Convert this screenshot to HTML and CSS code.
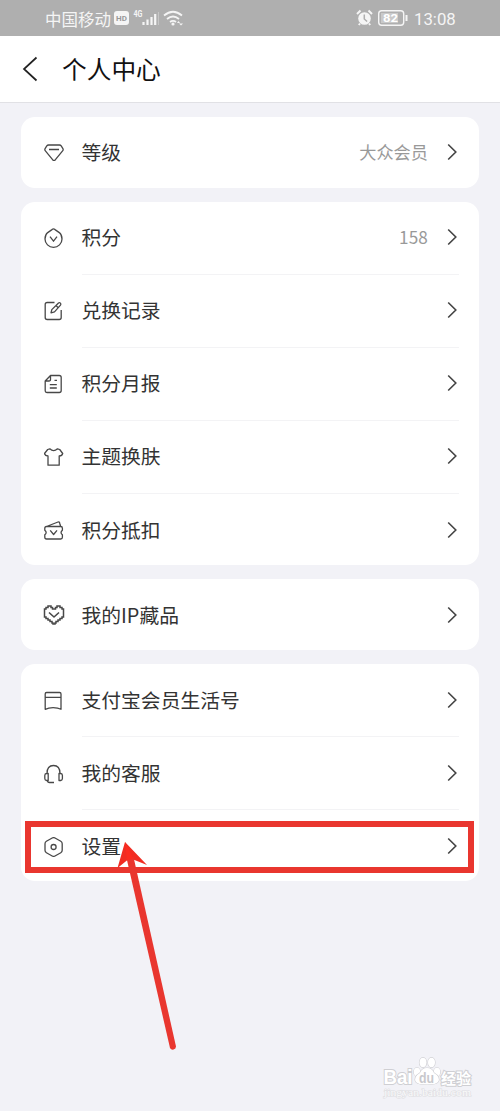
FILE: index.html
```html
<!DOCTYPE html>
<html lang="zh-CN">
<head>
<meta charset="utf-8">
<title>个人中心</title>
<link rel="stylesheet" href="styles.css">
</head>
<body>
<div class="screen">
  <header class="status">
    <span class="carrier">中国移动</span>
    <svg class="status-left" width="72" height="20" viewBox="0 0 72 20">
      <rect x="1" y="2" width="15" height="14" rx="3" fill="#f5f5f5"/>
      <text x="8.5" y="12.2" class="hd">HD</text>
      <text x="20.500" y="8" class="gen" textLength="9" lengthAdjust="spacingAndGlyphs">4G</text>
      <path d="M30.500 16v-3M34.500 16v-5.500M38.500 16V8M42.200 16V5" stroke="#f5f5f5" stroke-width="2.200"/>
      <path d="M45.500 3v13" stroke="#c6c6c6"/>
      <path d="M51 6.500q9-7.500 18 0M54 10q6-5 12 0M57 13q3-2.200 6 0" fill="none" stroke="#f5f5f5" stroke-width="1.800"/>
      <circle cx="60" cy="15" r="1.600" fill="#f5f5f5"/>
      <path d="M64 14l1.500-2 1.500 2zM66 14.500h4l-2 2z" fill="#f5f5f5"/>
    </svg>
    <svg class="status-right" width="52" height="20" viewBox="0 0 52 20">
      <circle cx="8.500" cy="9.500" r="6.300" fill="#f5f5f5"/>
      <path d="M1 5l3.500-3.500M16 5l-3.500-3.500M4 14.500L2.800 16M13 14.500l1.200 1.500" stroke="#f5f5f5" stroke-width="2"/>
      <path d="M8.300 5.500V10l2.800 2.500" fill="none" stroke="#afafaf" stroke-width="1.500"/>
      <rect x="22.700" y="1.700" width="25" height="14.600" rx="3" fill="none" stroke="#f5f5f5" stroke-width="1.400"/>
      <rect x="25" y="4" width="17" height="10" fill="#c9c9c9"/>
      <path d="M50.500 6v6" stroke="#f5f5f5" stroke-width="2"/>
      <text x="34.500" y="13" class="charge" textLength="15" lengthAdjust="spacingAndGlyphs">82</text>
    </svg>
    <span class="clock">13:08</span>
  </header>
  <nav class="titlebar">
    <svg width="18" height="26" viewBox="0 0 18 26"><path d="M14.500 1.500L2 13l12.500 11.500" class="back"/></svg>
    <h1>个人中心</h1>
  </nav>
  <main class="cards">
    <section class="card level">
      <div class="row"><svg class="icon" viewBox="0 0 20 20"><path d="M4.500 2h11q1 0 1.700.9l1.700 2.700q.7 1.200-.3 2.300l-7.200 8.800q-1.400 1.500-2.800 0L1.400 7.900q-1-1.100-.3-2.300l1.700-2.700Q3.500 2 4.500 2zM5 6.500h10"/></svg><span>等级</span><em>大众会员</em><svg class="go" viewBox="0 0 10 18"><path d="M1.200 1.500L8.800 9l-7.600 7.500"/></svg></div>
    </section>
    <section class="card">
      <div class="row"><svg class="icon" viewBox="0 0 20 20"><path d="M8 1.600Q9.500.2 11 1.600l4.300 3C17.500 6.400 18 8.500 18 11a8.500 8.300 0 0 1-17 0c0-2.500.5-4.600 2.700-6.400zM6 8.700l3.500 4.500 3.500-4.500"/></svg><span>积分</span><em class="points">158</em><svg class="go" viewBox="0 0 10 18"><path d="M1.200 1.500L8.800 9l-7.600 7.500"/></svg></div>
      <div class="row"><svg class="icon" viewBox="0 0 20 20"><path d="M10.500 1.500H3.200Q1.200 1.500 1.200 3.500v13q0 2 2 2h12q2 0 2-2V9M12 4.500l2.500-2.500q1-.8 1.900.1t.1 2L10.500 10.900l-3.500 1 .8-3.300 4.200-4.100 2.200 2.200"/></svg><span>兑换记录</span><svg class="go" viewBox="0 0 10 18"><path d="M1.200 1.500L8.800 9l-7.600 7.500"/></svg></div>
      <div class="row"><svg class="icon" viewBox="0 0 20 20"><path d="M6.500 1.500h8.700q2 0 2 2v13q0 2-2 2h-12q-2 0-2-2V7zM6.500 1.500v4Q6.500 7 5 7H1.200M5.800 10.700h7M5.800 14h7M10.500 6.300H13"/></svg><span>积分月报</span><svg class="go" viewBox="0 0 10 18"><path d="M1.200 1.500L8.800 9l-7.600 7.500"/></svg></div>
      <div class="row"><svg class="icon" viewBox="0 0 20 20"><path d="M5.800 1.800Q9.600 5.500 13.500 1.800l2.200.7 3 4q-.6 2.400-3.500 2.500v9.200H4V9Q1 8.900.5 6.500L3.700 2.500z"/></svg><span>主题换肤</span><svg class="go" viewBox="0 0 10 18"><path d="M1.200 1.500L8.800 9l-7.600 7.500"/></svg></div>
      <div class="row"><svg class="icon" viewBox="0 0 20 20"><path d="M2.500 5.500h14.200q1.700 0 1.700 1.700v2q-2.700 2.300 0 4.600v2.500q0 1.700-1.700 1.700H2.500Q.8 18 .8 16.300v-2.500q2.700-2.300 0-4.600v-2q0-1.700 1.700-1.700zM2.500 5.500L14 1q1.400-.4 1.700 1.200l1 3.300M6.200 9.300l3.400 4.200L13 9.300"/></svg><span>积分抵扣</span><svg class="go" viewBox="0 0 10 18"><path d="M1.200 1.500L8.800 9l-7.600 7.500"/></svg></div>
    </section>
    <section class="card collection">
      <div class="row"><svg class="icon heart" viewBox="0 0 22 22"><path class="pixels" d="M5 2h3v1.500h1.500V5h3V3.500H14V2h3v1.500h2V5h1.500v8H19v1.500h-2V16h-2v1.500h-2V19h-1v1h-2v-1H9v-1.500H7V16H5v-1.500H3V13H1.500V5H3V3.500h2z"/><path d="M6 8.500l5 4.500 5-4.500"/></svg><span>我的IP藏品</span><svg class="go" viewBox="0 0 10 18"><path d="M1.200 1.500L8.800 9l-7.600 7.500"/></svg></div>
    </section>
    <section class="card service">
      <div class="row"><svg class="icon" viewBox="0 0 20 20"><path d="M2.600 1.500h13q1.400 0 1.400 1.400v15.400q-3-1.600-7.900-1.600Q4.500 16.700 1.200 18.300V2.900q0-1.400 1.400-1.400zM1.200 6.300H17"/></svg><span>支付宝会员生活号</span><svg class="go" viewBox="0 0 10 18"><path d="M1.200 1.500L8.800 9l-7.600 7.500"/></svg></div>
      <div class="row"><svg class="icon" viewBox="0 0 20 20"><path d="M3 9.500Q3 1.500 9.500 1.500t6.500 8M2.500 9.500h1.700v7H2.500Q.8 16.300.8 14.500v-3q0-1.900 1.700-2zM15 9.500h1.700q1.700.1 1.700 2v3q0 1.800-1.700 2H15zM3.500 16.500q0 2 2 2H10"/></svg><span>我的客服</span><svg class="go" viewBox="0 0 10 18"><path d="M1.200 1.500L8.800 9l-7.600 7.500"/></svg></div>
      <div class="row"><svg class="icon" viewBox="0 0 20 20"><path d="M8.200 1q1.400-.8 2.800 0l5.800 3.300q1.400.8 1.400 2.400v6.600q0 1.600-1.400 2.400L11 19q-1.400.8-2.800 0l-5.800-3.300Q1 14.900 1 13.300V6.700q0-1.600 1.400-2.400z"/><circle cx="9.600" cy="10" r="2.500"/></svg><span>设置</span><svg class="go" viewBox="0 0 10 18"><path d="M1.200 1.500L8.800 9l-7.600 7.500"/></svg></div>
    </section>
  </main>
  <div class="highlight"></div>
  <svg class="arrow" width="60" height="220" viewBox="0 0 60 220">
    <path d="M9 1L31 24 17.200 18.500 11.500 19 1.500 27z" fill="#f12c22"/>
    <path d="M10.500 17l7-1L60 205.500a3.200 3.200 0 0 1-6 1.500z" fill="#e9362f"/>
    <path d="M9 1l8.500 17-6.500 1z" fill="#fb2b20"/>
  </svg>
  <svg class="watermark" width="100" height="50" viewBox="0 0 100 50">
    <g class="mark">
      <text x="1.500" y="31" class="brand" textLength="29" lengthAdjust="spacingAndGlyphs">Bai</text>
      <ellipse cx="35" cy="19" rx="3.200" ry="4.200"/><ellipse cx="41" cy="9.500" rx="3.500" ry="4.800"/><ellipse cx="49.500" cy="9.500" rx="3.500" ry="4.800"/><ellipse cx="55" cy="19" rx="3.200" ry="4.200"/>
      <path d="M45 15q5 0 7 5 7 4 4 9-2 2.500-11 2.500T34 29q-3-5 4-9 2-5 7-5z"/>
      <text x="37" y="30" class="du" textLength="15" lengthAdjust="spacingAndGlyphs">du</text>
      <text x="59" y="30.500" class="exp">经验</text>
      <text x="2" y="43" class="site" textLength="87" lengthAdjust="spacingAndGlyphs">jingyan.baidu.com</text>
    </g>
  </svg>
</div>
</body>
</html>
```
FILE: styles.css
```css
* { box-sizing: border-box; }
body { margin: 0; font-family: "Noto Sans CJK SC", sans-serif; }
.screen { position: relative; height: 1111px; overflow: hidden; background: #f2f2f7; }

.status { display: flex; align-items: center; height: 36px; padding: 2px 44px 0 45px; background: #afafaf; color: #f5f5f5; }
.carrier { font-size: 16.5px; line-height: 20px; white-space: nowrap; }
.status-left { margin-left: 2px; flex: none; }
.status-right { margin-left: auto; margin-right: 6px; flex: none; }
.clock { font: 16.8px/20px Roboto, sans-serif; width: 42px; white-space: nowrap; }
.hd { font: bold 8px Roboto, sans-serif; fill: #999; text-anchor: middle; }
.gen { font: bold 9px Roboto, sans-serif; fill: #f5f5f5; }
.charge { font: bold 11.5px Roboto, sans-serif; fill: #fff; text-anchor: middle; }

.titlebar { display: flex; align-items: center; height: 67px; padding: 0 22px; background: #fff; border-bottom: 1px solid #e1e1e5; }
.titlebar h1 { margin: -2px 0 0 22px; font-size: 24.7px; font-weight: 400; line-height: 36px; color: #111; }
.back { fill: none; stroke: #222; stroke-width: 1.7; }

.cards { display: flex; flex-direction: column; gap: 14px; padding: 14px 21px; }
.card { background: #fff; border-radius: 14px; padding-left: 23px; }
.row { position: relative; display: flex; align-items: center; height: 73px; padding: 0 22px 3px 0; font-size: 19.8px; line-height: 28px; color: #333; }
.row:last-child { height: 71px; padding-bottom: 0; }
.row:not(:last-child)::after { content: ""; position: absolute; left: 38px; right: 20px; bottom: 0; height: 1px; background: #f3f3f5; }
.row span { margin-left: 17.5px; }
.row em { margin-left: auto; font-style: normal; font-size: 17.2px; color: #999; }
.row em + .go { margin-left: 19px; }
.icon { width: 20px; height: 20px; margin-top: 2px; flex: none; fill: none; stroke: #484848; stroke-width: 1.3; stroke-linejoin: round; }
.heart { width: 22px; height: 22px; margin-left: -1.5px; margin-right: -.5px; margin-top: 0; stroke-width: 1.6; }
.pixels { stroke-width: 1.5; stroke-linejoin: miter; }
.go { width: 10px; height: 18px; margin-left: auto; flex: none; fill: none; stroke: #444; stroke-width: 1.6; }
.level .row { height: 71px; padding-bottom: 2px; }
.points { letter-spacing: .1px; }
.collection .row { height: 71px; }
.service .row { padding-bottom: 1px; }
.service .row:last-child { padding-bottom: 0; }

.highlight { position: absolute; left: 25px; top: 821px; width: 449px; height: 52px; border: 6px solid #e9362f; }
.arrow { position: absolute; left: 116px; top: 841px; }

.watermark { position: absolute; left: 382px; top: 1053px; }
.mark { fill: #fff; stroke: #cfcfd3; stroke-width: 1.2; paint-order: stroke; }
.brand { font: bold 20px "Liberation Sans", sans-serif; stroke-width: 2; }
.du { font: bold 14px "Liberation Sans", sans-serif; fill: #c8c8cc; stroke: none; }
.exp { font: bold 15px "Noto Sans CJK SC", sans-serif; stroke-width: 2; }
.site { font: 11px "Liberation Serif", serif; fill: #fafafa; stroke: #dedee2; }
```
